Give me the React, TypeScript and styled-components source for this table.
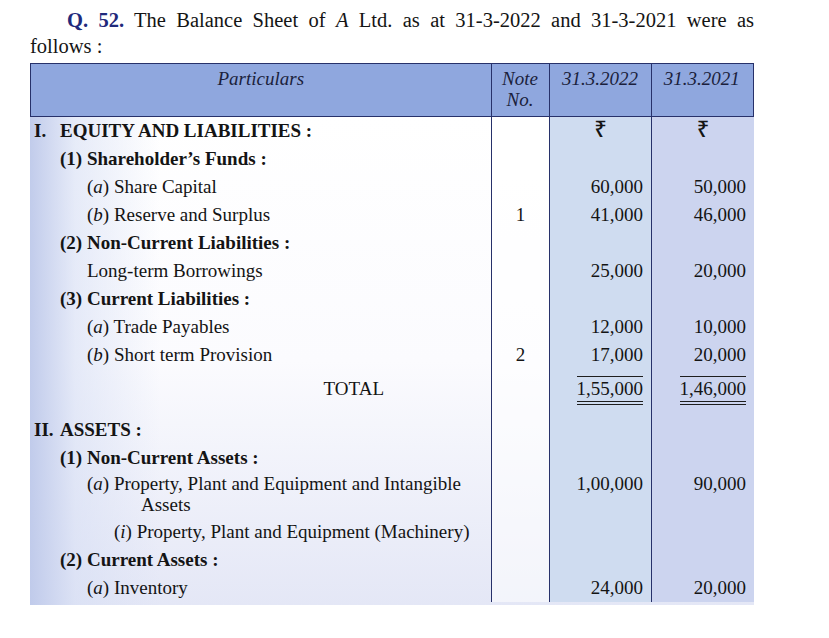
import React from 'react';
import styled, { createGlobalStyle } from 'styled-components';

const GlobalStyle = createGlobalStyle`
  body {
    margin: 0;
    background: #ffffff;
    font-family: "Liberation Serif", "Times New Roman", serif;
    color: #141414;
  }
`;

const NAVY = '#27316a';

const Page = styled.div`
  width: 829px;
  height: 638px;
  padding-top: 7px;
  box-sizing: border-box;
  overflow: hidden;
`;

const Question = styled.div`
  margin-left: 30px;
  width: 724px;
  font-size: 20.5px;
  line-height: 26px;
`;

const FirstLine = styled.div`
  padding-left: 37px;
  text-align: justify;
  text-align-last: justify;
`;

const QNum = styled.b`
  color: #1f2a7c;
`;

const Table = styled.div`
  margin: 4px 0 0 30px;
  width: 724px;
`;

const Header = styled.div`
  display: grid;
  grid-template-columns: 459.5px 58px 102px 101.5px;
  height: 54px;
  box-sizing: border-box;
  border: 1.5px solid ${NAVY};
  background: #8fa7de;
  font-style: italic;
  font-size: 19px;
  line-height: 21px;
  color: #1b1f3c;
`;

const HeadCell = styled.div<{ $first?: boolean }>`
  padding-top: 4px;
  text-align: center;
  border-left: ${p => (p.$first ? 'none' : `1.5px solid ${NAVY}`)};
`;

const Body = styled.div`
  display: grid;
  grid-template-columns: 461px 58px 102px 103px;
  padding-bottom: 3px;
  font-size: 19px;
  background:
    linear-gradient(to right, rgba(190, 201, 234, 0.95) 0px, rgba(214, 222, 244, 0.6) 45px, rgba(255, 255, 255, 0) 130px),
    linear-gradient(to bottom, #ffffff 0%, #fbfbfe 50%, #e4e7f6 100%);
`;

const Cell = styled.div<{ $bg?: string; $line?: boolean; $align?: string; $pt: number; $lh: number; $h: number; $pl?: number; $pr?: number }>`
  box-sizing: border-box;
  min-height: ${p => p.$h}px;
  padding-top: ${p => p.$pt}px;
  padding-left: ${p => p.$pl ?? 0}px;
  padding-right: ${p => p.$pr ?? 0}px;
  line-height: ${p => p.$lh}px;
  text-align: ${p => p.$align ?? 'left'};
  background: ${p => p.$bg ?? 'transparent'};
  border-left: ${p => (p.$line ? `1.5px solid ${NAVY}` : 'none')};
  white-space: nowrap;
`;

const Roman = styled.span`
  display: inline-block;
  width: 26px;
`;

const Continuation = styled.div`
  padding-left: 54px;
  line-height: 16px;
`;

const Rupee = styled.span`
  font-family: "Noto Sans", "DejaVu Sans", sans-serif;
  font-size: 22px;
  font-weight: 500;
  line-height: 0;
`;

const Total = styled.span`
  display: inline-block;
  line-height: 24px;
  border-top: 1.5px solid #1e1e1e;
  border-bottom: 4px double #1e1e1e;
`;

type RowData = {
  label: React.ReactNode;
  level: number;
  bold?: boolean;
  note?: string;
  a?: React.ReactNode;
  b?: React.ReactNode;
  h?: number;
  pt?: number;
  lh?: number;
  total?: boolean;
  cont?: string;
};

const Item = ({ k, text }: { k: string; text: string }) => (
  <>
    (<i>{k}</i>) {text}
  </>
);

const rows: RowData[] = [
  { label: <><Roman>I.</Roman>EQUITY AND LIABILITIES :</>, level: 0, bold: true, a: <Rupee>₹</Rupee>, b: <Rupee>₹</Rupee> },
  { label: '(1) Shareholder’s Funds :', level: 1, bold: true },
  { label: <Item k="a" text="Share Capital" />, level: 2, a: '60,000', b: '50,000' },
  { label: <Item k="b" text="Reserve and Surplus" />, level: 2, note: '1', a: '41,000', b: '46,000' },
  { label: '(2) Non-Current Liabilities :', level: 1, bold: true },
  { label: 'Long-term Borrowings', level: 2, a: '25,000', b: '20,000' },
  { label: '(3) Current Liabilities :', level: 1, bold: true },
  { label: <Item k="a" text="Trade Payables" />, level: 2, a: '12,000', b: '10,000' },
  { label: <Item k="b" text="Short term Provision" />, level: 2, note: '2', a: '17,000', b: '20,000' },
  { label: 'TOTAL', level: -1, total: true, a: '1,55,000', b: '1,46,000', h: 47, pt: 6 },
  { label: <><Roman>II.</Roman>ASSETS :</>, level: 0, bold: true },
  { label: '(1) Non-Current Assets :', level: 1, bold: true, h: 27, lh: 27 },
  { label: <Item k="a" text="Property, Plant and Equipment and Intangible" />, cont: 'Assets', level: 2, a: '1,00,000', b: '90,000', h: 47, lh: 26 },
  { label: <Item k="i" text="Property, Plant and Equipment (Machinery)" />, level: 3 },
  { label: '(2) Current Assets :', level: 1, bold: true },
  { label: <Item k="a" text="Inventory" />, level: 2, a: '24,000', b: '20,000' },
];

const indent = [4, 30, 57, 84];

const Row = ({ r }: { r: RowData }) => {
  const h = r.h ?? 28;
  const pt = r.pt ?? 0;
  const lh = r.lh ?? 28;
  const amount = (v: React.ReactNode) => {
    if (v === undefined) return null;
    if (r.total) return <Total>{v}</Total>;
    return v;
  };
  const isRupee = typeof r.a !== 'string' && r.a !== undefined && !r.total;
  return (
    <>
      <Cell
        $h={h}
        $pt={pt}
        $lh={lh}
        $pl={r.total ? 0 : indent[r.level]}
        $pr={r.total ? 107 : 0}
        $align={r.total ? 'right' : 'left'}
        style={{ fontWeight: r.bold ? 700 : 400 }}
      >
        {r.label}
        {r.cont && <Continuation>{r.cont}</Continuation>}
      </Cell>
      <Cell $h={h} $pt={pt} $lh={lh} $line $align="center" $bg="rgba(255,255,255,0.55)">
        {r.note}
      </Cell>
      <Cell $h={h} $pt={pt} $lh={lh} $line $align={isRupee ? 'center' : 'right'} $pr={isRupee ? 0 : 8} $bg="#cfdcf0">
        {amount(r.a)}
      </Cell>
      <Cell $h={h} $pt={pt} $lh={lh} $line $align={isRupee ? 'center' : 'right'} $pr={isRupee ? 0 : 8} $bg="#ccd4ef">
        {amount(r.b)}
      </Cell>
    </>
  );
};

export default function App() {
  return (
    <Page>
      <GlobalStyle />
      <Question>
        <FirstLine>
          <QNum>Q. 52.</QNum> The Balance Sheet of <i>A</i> Ltd. as at 31-3-2022 and 31-3-2021 were as
        </FirstLine>
        <div>follows :</div>
      </Question>
      <Table>
        <Header>
          <HeadCell $first>Particulars</HeadCell>
          <HeadCell>
            Note
            <br />
            No.
          </HeadCell>
          <HeadCell>31.3.2022</HeadCell>
          <HeadCell>31.3.2021</HeadCell>
        </Header>
        <Body>
          {rows.map((r, i) => (
            <Row key={i} r={r} />
          ))}
        </Body>
      </Table>
    </Page>
  );
}
